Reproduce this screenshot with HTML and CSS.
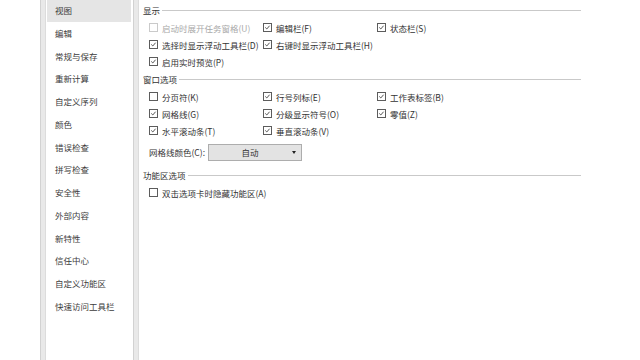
FILE: index.html
```html
<!DOCTYPE html>
<html lang="zh-CN">
<head>
    <meta charset="UTF-8">
    <meta name="viewport" content="width=device-width, initial-scale=1.0">
    <title>选项</title>
    <link rel="stylesheet" href="styles.css">
</head>
<body>
<div class="window">
    <div class="gutter"></div>
    <div class="rail"></div>
    <ul class="nav">
        <li class="selected">视图</li>
        <li>编辑</li>
        <li>常规与保存</li>
        <li>重新计算</li>
        <li>自定义序列</li>
        <li>颜色</li>
        <li>错误检查</li>
        <li>拼写检查</li>
        <li>安全性</li>
        <li>外部内容</li>
        <li>新特性</li>
        <li>信任中心</li>
        <li>自定义功能区</li>
        <li>快速访问工具栏</li>
    </ul>
    <div class="rail"></div>

    <div class="content">
        <div class="group-title"><span>显示</span></div>
        <div class="grid">
            <label class="opt disabled"><i class="box"></i>启动时展开任务窗格(U)</label>
            <label class="opt"><i class="box"><svg viewBox="0 0 9 9"><path d="M1.6 4.4 L3.6 6.4 L7.2 2.2"/></svg></i>编辑栏(F)</label>
            <label class="opt"><i class="box"><svg viewBox="0 0 9 9"><path d="M1.6 4.4 L3.6 6.4 L7.2 2.2"/></svg></i>状态栏(S)</label>
            <label class="opt"><i class="box"><svg viewBox="0 0 9 9"><path d="M1.6 4.4 L3.6 6.4 L7.2 2.2"/></svg></i>选择时显示浮动工具栏(D)</label>
            <label class="opt"><i class="box"><svg viewBox="0 0 9 9"><path d="M1.6 4.4 L3.6 6.4 L7.2 2.2"/></svg></i>右键时显示浮动工具栏(H)</label>
            <span></span>
            <label class="opt"><i class="box"><svg viewBox="0 0 9 9"><path d="M1.6 4.4 L3.6 6.4 L7.2 2.2"/></svg></i>启用实时预览(P)</label>
        </div>

        <div class="group-title"><span>窗口选项</span></div>
        <div class="grid">
            <label class="opt"><i class="box"></i>分页符(K)</label>
            <label class="opt"><i class="box"><svg viewBox="0 0 9 9"><path d="M1.6 4.4 L3.6 6.4 L7.2 2.2"/></svg></i>行号列标(E)</label>
            <label class="opt"><i class="box"><svg viewBox="0 0 9 9"><path d="M1.6 4.4 L3.6 6.4 L7.2 2.2"/></svg></i>工作表标签(B)</label>
            <label class="opt"><i class="box"><svg viewBox="0 0 9 9"><path d="M1.6 4.4 L3.6 6.4 L7.2 2.2"/></svg></i>网格线(G)</label>
            <label class="opt"><i class="box"><svg viewBox="0 0 9 9"><path d="M1.6 4.4 L3.6 6.4 L7.2 2.2"/></svg></i>分级显示符号(O)</label>
            <label class="opt"><i class="box"><svg viewBox="0 0 9 9"><path d="M1.6 4.4 L3.6 6.4 L7.2 2.2"/></svg></i>零值(Z)</label>
            <label class="opt"><i class="box"><svg viewBox="0 0 9 9"><path d="M1.6 4.4 L3.6 6.4 L7.2 2.2"/></svg></i>水平滚动条(T)</label>
            <label class="opt"><i class="box"><svg viewBox="0 0 9 9"><path d="M1.6 4.4 L3.6 6.4 L7.2 2.2"/></svg></i>垂直滚动条(V)</label>
        </div>
        <div class="color-row">
            <span>网格线颜色(C):</span>
            <div class="select"><span>自动</span><b class="arrow"></b></div>
        </div>

        <div class="group-title"><span>功能区选项</span></div>
        <div class="grid">
            <label class="opt wide"><i class="box"></i>双击选项卡时隐藏功能区(A)</label>
        </div>
    </div>
</div>
</body>
</html>
```

FILE: styles.css
```css
* { margin: 0; padding: 0; box-sizing: border-box; }
body { font-family: "Noto Sans CJK SC", "Noto Sans", sans-serif; font-size: 8.5px; color: #333; background: #fff; }
.window { display: flex; height: 360px; width: 640px; overflow: hidden; }
.gutter { width: 40px; }
.rail { width: 6px; background: linear-gradient(to right, #d2d2d2 0, #d2d2d2 1px, #e9e9e9 1px, #e9e9e9 5px, #dcdcdc 5px); }
.nav { list-style: none; width: 87px; margin-top: -1px; }
.nav li { height: 22.75px; line-height: 22.75px; padding-left: 8px; margin: 0 2px 0 1px; color: #3c3c3c; white-space: nowrap; }
.nav li.selected { background: #e5e5e5; }
.content { width: 442px; padding-left: 4px; padding-top: 1px; }
.group-title { display: flex; align-items: center; height: 18px; line-height: 18px; color: #333; }
.group-title::after { content: ""; flex: 1; height: 1px; background: #c9c9c9; margin-left: 2px; }
.grid { display: grid; grid-template-columns: 114px 114px auto; padding-left: 6px; }
.opt { display: flex; align-items: center; height: 17px; white-space: nowrap; color: #333; }
.opt.wide { grid-column: span 3; }
.opt.disabled { color: #a9a9a9; }
.box { display: inline-block; width: 9px; height: 9px; border: 1px solid #5c5c5c; margin-right: 4px; flex: none; }
.box svg { display: block; width: 7px; height: 7px; }
.box path { fill: none; stroke: #3a3a3a; stroke-width: 1.1; }
.disabled .box { border-color: #cacaca; }
.color-row { display: flex; align-items: center; margin-top: 4px; padding-left: 6px; height: 18px; }
.select { width: 94px; height: 17px; margin-left: 3px; background: #e3e3e3; border: 1px solid #adadad; display: flex; align-items: center; justify-content: center; position: relative; }
.select span { margin-right: 10px; }
.arrow { position: absolute; right: 5px; top: 6px; width: 0; height: 0; border-left: 2.5px solid transparent; border-right: 2.5px solid transparent; border-top: 3px solid #222; }
.color-row + .group-title { margin-top: 5px; }
```
